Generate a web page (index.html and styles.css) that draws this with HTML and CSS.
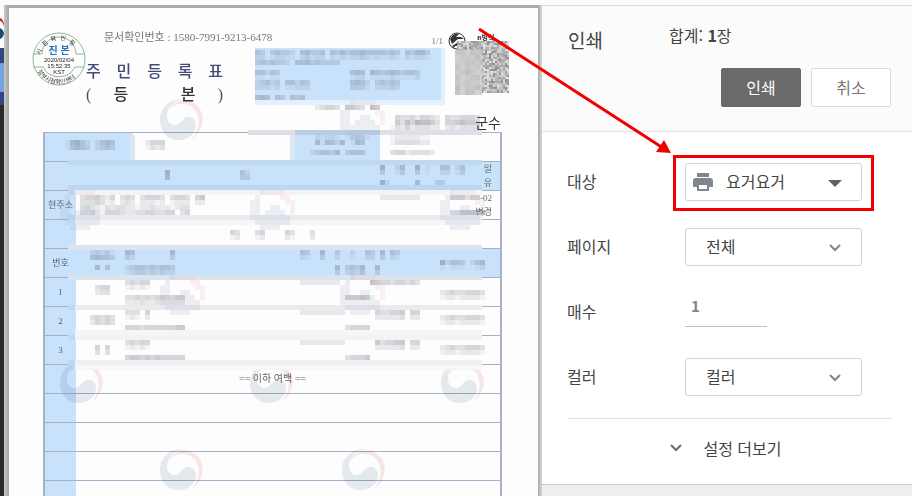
FILE: index.html
```html
<!DOCTYPE html>
<html lang="ko">
<head>
  <meta charset="UTF-8">
  <meta name="viewport" content="width=device-width, initial-scale=1.0">
  <title>인쇄</title>
  <link rel="stylesheet" href="styles.css">
</head>
<body>
  <div class="backdrop">
    <svg width="4" height="496" viewBox="0 0 4 496">
      <rect y="105" width="4" height="391" fill="#2b2827"/>
      <rect y="48" width="4" height="57" fill="#34447f"/>
      <rect y="63" width="4" height="29" rx="1" fill="#76a5dc"/>
      <path d="M0 18 Q3 19 4 24 L4 26 Q2 21 0 21Z" fill="#cf2438"/>
      <path d="M0 28 Q4 30 4 34 Q3 38 0 39Z" fill="#1e4a70"/>
    </svg>
  </div>

  <main class="preview">
    <div class="paper">
      <header class="doc-header">
        <svg class="stamp" width="54" height="54" viewBox="0 0 54 54">
          <defs>
            <path id="arc-top" d="M8 27 A19 19 0 0 1 46 27"/>
            <path id="arc-bottom" d="M2 27 A25 25 0 0 0 52 27"/>
          </defs>
          <g fill="none" stroke="#8fb893">
            <circle cx="27" cy="27" r="26"/>
            <path d="M1 22H10M44 22H53M10 22A17 17 0 0 1 44 22M1 35H11M43 35H53M11 35A18 18 0 0 0 43 35"/>
          </g>
          <text class="stamp-ring"><textPath href="#arc-top" startOffset="4">시  점  확  인  필</textPath></text>
          <text class="stamp-ring"><textPath href="#arc-bottom" startOffset="13">정부시점확인센터</textPath></text>
          <text class="stamp-title" x="27" y="22">진 본</text>
          <text class="stamp-date" x="27" y="30">2020/02/04</text>
          <text class="stamp-date" x="27" y="36">15:52:35</text>
          <text class="stamp-date" x="27" y="42">KST</text>
        </svg>

        <div class="doc-head">
          <p class="doc-number">문서확인번호 : 1580-7991-9213-6478</p>
          <h1 class="doc-title"><span>주</span><span>민</span><span>등</span><span>록</span><span>표</span></h1>
          <p class="doc-kind"><span>(</span><b>등</b><b>본</b><span>)</span></p>
        </div>

        <div class="doc-info">
          <p class="page-number">1/1</p>
          <div class="info-box"></div>
        </div>

        <svg class="doc-code" width="64" height="66" viewBox="446 30 64 66">
          <circle cx="457" cy="41" r="8" fill="none" stroke="#333" stroke-width="1"/>
          <path d="M450 39Q453 33 459 34L456 37L461 37L464 39L458 39L452 44ZM452 46L460 41L465 42L458 44L461 46L455 46L454 48Z" fill="#333"/>
          <text class="code-label" x="477" y="40">B방식</text>
          <g id="qr"></g>
        </svg>
      </header>

      <p class="issuer">군수</p>

      <table class="register">
        <colgroup>
          <col class="col-no"><col class="col-label"><col class="col-name"><col class="col-reason"><col>
        </colgroup>
        <tbody>
          <tr><td class="blue" colspan="2"></td><td></td><td class="blue"></td><td></td></tr>
          <tr class="blue"><td colspan="4"></td><td class="edge">일<br>유</td></tr>
          <tr><th>현주소</th><td colspan="3"></td><td class="edge">-02<br>변경</td></tr>
          <tr><th></th><td colspan="4"></td></tr>
          <tr class="blue"><th>번호</th><td colspan="4"></td></tr>
          <tr><th>1</th><td colspan="4"></td></tr>
          <tr><th>2</th><td colspan="4"></td></tr>
          <tr><th>3</th><td colspan="4"></td></tr>
          <tr><th></th><td class="end-mark" colspan="4">== 이하 여백 ==</td></tr>
          <tr><th></th><td colspan="4"></td></tr>
          <tr><th></th><td colspan="4"></td></tr>
          <tr><th></th><td colspan="4"></td></tr>
          <tr><th></th><td colspan="4"></td></tr>
        </tbody>
      </table>

      <svg class="watermarks" width="529" height="488" viewBox="9 8 529 488">
        <defs>
          <g id="mark">
            <path d="M24 1C10 0 0 9 0 22C0 34 8 42 18 42C28 42 36 36 36 27C36 21 31 18 27 19C22 20 20 27 15 27C10 27 7 23 7 18C7 9 14 2 24 1Z" fill="#e6ebf0"/>
            <path d="M8 13C12 3 24 0 32 4C46 11 47 30 31 42C42 30 41 14 30 8C22 4 13 6 8 13Z" fill="#fae7e9"/>
          </g>
        </defs>
        <use href="#mark" x="160" y="98"/>
        <use href="#mark" x="60" y="361"/>
        <use href="#mark" x="250" y="361"/>
        <use href="#mark" x="441" y="361"/>
        <use href="#mark" x="160" y="448"/>
        <use href="#mark" x="342" y="448"/>
      </svg>
      <svg class="mosaic" id="mosaic" width="529" height="488" viewBox="9 8 529 488"></svg>
    </div>
  </main>

  <form class="sidebar">
    <header class="sidebar-header">
      <div class="summary">
        <h2>인쇄</h2>
        <p>합계: <b>1</b>장</p>
      </div>
      <div class="actions">
        <button type="button" class="button primary">인쇄</button>
        <button type="button" class="button">취소</button>
      </div>
    </header>

    <div class="settings">
      <div class="row">
        <label for="target">대상</label>
        <div class="field printer">
          <svg class="printer-icon" width="20" height="18" viewBox="0 0 20 18">
            <path d="M4 0H16V4H4ZM3 5H17A3 3 0 0 1 20 8V14H16V10H4V14H0V8A3 3 0 0 1 3 5Z" fill="#80868b"/>
            <path d="M5 11H15V17H5Z" fill="#fff" stroke="#80868b" stroke-width="2"/>
          </svg>
          <select id="target"><option>요거요거</option></select>
          <svg class="arrow" width="14" height="8" viewBox="0 0 14 8"><path d="M0 1H14L7 8Z" fill="#5f6368"/></svg>
        </div>
      </div>
      <div class="row">
        <label for="pages">페이지</label>
        <div class="field">
          <select id="pages"><option>전체</option></select>
          <svg class="arrow" width="14" height="8" viewBox="0 0 14 8"><path d="M2 1L7 6L12 1" fill="none" stroke="#858585" stroke-width="2"/></svg>
        </div>
      </div>
      <div class="row">
        <label for="copies">매수</label>
        <input id="copies" type="text" value="1">
      </div>
      <div class="row">
        <label for="color">컬러</label>
        <div class="field">
          <select id="color"><option>컬러</option></select>
          <svg class="arrow" width="14" height="8" viewBox="0 0 14 8"><path d="M2 1L7 6L12 1" fill="none" stroke="#858585" stroke-width="2"/></svg>
        </div>
      </div>
      <button type="button" class="more">
        <svg width="14" height="8" viewBox="0 0 14 8"><path d="M2 1L7 6L12 1" fill="none" stroke="#6b6e73" stroke-width="2"/></svg>
        설정 더보기
      </button>
    </div>

    <svg class="pointer" width="200" height="140" viewBox="475 20 200 140">
      <path d="M479 29L663 148" stroke="#f20000" stroke-width="3"/>
      <path d="M671 153L656 152L664 140Z" fill="#f20000"/>
    </svg>
  </form>

  <script src="mosaic.js"></script>
</body>
</html>
```
FILE: styles.css
```css
* {
  box-sizing: border-box;
}

body {
  margin: 0;
  padding-top: 5px;
  min-height: 100vh;
  display: flex;
  overflow: hidden;
  background-color: #fcfcfc;
  font-family: "Noto Sans CJK KR", sans-serif;
  color: #444;
}

h1, h2, p {
  margin: 0;
  font-weight: normal;
}

.backdrop {
  width: 4px;
  margin-top: -5px;
  height: 100vh;
  overflow: hidden;
}

.backdrop svg {
  display: block;
}

/* preview */
.preview {
  flex: 1;
  height: calc(100vh - 5px);
  padding: 3px 4px 0 5px;
  overflow: hidden;
  background: linear-gradient(90deg, #c9c9c7, #a9a9a5 4px, #a9a9a5 calc(100% - 4px), #d8d8d6);
}

.paper {
  position: relative;
  height: 100%;
  overflow: hidden;
  background-color: #fdfdfd;
  font-family: "Liberation Serif", "Noto Sans CJK KR", serif;
}

.doc-header {
  display: flex;
  height: 106px;
  padding: 22px 0 0 23px;
}

.stamp {
  flex: none;
  margin-top: 2px;
}

.stamp text {
  font-family: "Noto Sans CJK KR", sans-serif;
}

.stamp .stamp-ring {
  font-size: 6px;
  white-space: pre;
  fill: #333;
}

.stamp .stamp-title {
  font-size: 10px;
  font-weight: bold;
  text-anchor: middle;
  fill: #2473b5;
}

.stamp .stamp-date {
  font-family: "Liberation Sans", sans-serif;
  font-size: 6px;
  text-anchor: middle;
  fill: #222;
}

.doc-head {
  flex: none;
  width: 137px;
}

.doc-number {
  padding-left: 18px;
  font-size: 11px;
  line-height: 15px;
  white-space: nowrap;
  color: #777;
}

.doc-title {
  display: flex;
  justify-content: space-between;
  margin-top: 15px;
  font-size: 16px;
  line-height: 23px;
  font-weight: 500;
  color: #424b78;
}

.doc-kind {
  display: flex;
  justify-content: space-between;
  font-size: 16px;
  line-height: 23px;
  color: #424b78;
}

.doc-kind b {
  font-weight: 500;
  color: #333;
}

.doc-kind b:first-of-type {
  margin-right: 30px;
}

.doc-info {
  flex: none;
  width: 190px;
  margin-left: 32px;
}

.page-number {
  height: 18px;
  padding: 5px 2px 0 0;
  text-align: right;
  font-size: 9px;
  line-height: 12px;
  color: #777;
}

.info-box {
  height: 57px;
  background-color: #c9e2fb;
  border: solid #e4f0fb;
  border-width: 0 4px 5px 0;
}

.doc-code {
  flex: none;
  margin-left: 1px;
}

.code-label {
  font-size: 7px;
  font-weight: bold;
  fill: #333;
}

.issuer {
  padding-right: 37px;
  text-align: right;
  font-size: 14px;
  line-height: 20px;
  height: 18px;
  color: #333;
}

.register {
  width: calc(100% - 70px);
  margin-left: 34px;
  table-layout: fixed;
  border-collapse: separate;
  border-spacing: 0;
  border: solid #a9b1c8;
  border-width: 0 2px;
  font-size: 10px;
  line-height: 14px;
}

.col-no {
  width: 31px;
}

.col-label {
  width: 57px;
}

.col-name {
  width: 162px;
}

.col-reason {
  width: 85px;
}

.register td,
.register th {
  height: 29px;
  padding: 0;
  border-top: 1px solid #a6afc8;
  font-weight: normal;
  color: #666;
}

.register th {
  background-color: #c9e2fb;
  font-size: 9px;
  white-space: nowrap;
  color: #4f5f74;
}

.register .blue {
  background-color: #c9e2fb;
}

.register .edge {
  padding-right: 8px;
  text-align: right;
  font-size: 9px;
}

.register .end-mark {
  padding-right: 31px;
  text-align: center;
}

.watermarks,
.mosaic {
  position: absolute;
  top: 0;
  left: 0;
}

.watermarks {
  mix-blend-mode: multiply;
}

/* settings */
.sidebar {
  position: relative;
  flex: 0 0 370px;
  height: calc(100vh - 5px);
  background-color: #eee;
  border-top: 1px solid #ddd;
}

.sidebar-header {
  height: 126px;
  padding: 16px 21px 0 26px;
  background-color: #fbfbfb;
  border-bottom: 1px solid #e4e4e4;
}

.summary {
  display: flex;
}

.summary h2 {
  width: 101px;
  padding-top: 4px;
  font-size: 19px;
  line-height: 28px;
}

.summary p {
  font-size: 16px;
  line-height: 26px;
}

.summary b {
  font-weight: bold;
}

.actions {
  display: flex;
  justify-content: flex-end;
  gap: 10px;
  margin-top: 14px;
}

.button {
  width: 80px;
  height: 39px;
  padding: 0 0 2px;
  font-family: inherit;
  font-size: 16px;
  color: #777;
  background-color: #fff;
  border: 1px solid #dcdcdc;
  border-radius: 2px;
}

.button.primary {
  color: #fff;
  background-color: #6b6a68;
  border-color: #6b6a68;
}

.settings {
  padding: 17px 20px 0 25px;
  height: 353px;
  background-color: #fff;
  border-bottom: 1px solid #c8c8c8;
}

.row {
  display: flex;
  align-items: center;
  height: 65px;
}

.row label {
  width: 118px;
  padding-bottom: 2px;
  font-size: 16px;
  line-height: 24px;
}

.field {
  position: relative;
  width: 177px;
}

.field select {
  display: block;
  appearance: none;
  width: 100%;
  height: 38px;
  padding: 0 40px 2px 20px;
  font-family: inherit;
  font-size: 16px;
  color: #444;
  background-color: #fff;
  border: 1px solid #d4d4d4;
  border-radius: 3px;
}

.field .arrow {
  position: absolute;
  right: 20px;
  top: 16px;
}

.printer select {
  padding-left: 40px;
}

.printer-icon {
  position: absolute;
  left: 8px;
  top: 10px;
}

/* red frame around the printer list */
.printer::after {
  content: '';
  position: absolute;
  inset: -8px -12px -10px;
  border: 3px solid #f20000;
  pointer-events: none;
}

#copies {
  width: 82px;
  height: 38px;
  padding: 0 6px 4px;
  margin-bottom: 8px;
  font-family: inherit;
  font-size: 15px;
  font-weight: bold;
  color: #858585;
  background: none;
  border: none;
  border-bottom: 1px solid #c0c0c0;
}

.more {
  display: flex;
  align-items: center;
  justify-content: center;
  gap: 20px;
  width: 100%;
  height: 58px;
  margin-top: 9px;
  padding: 0 8px 0 0;
  font-family: inherit;
  font-size: 16px;
  color: #444;
  background: none;
  border: none;
  border-top: 1px solid #e0e0e0;
}

.pointer {
  position: absolute;
  left: -67px;
  top: 14px;
  pointer-events: none;
}
```
FILE: mosaic.js
```js
const NS = 'http://www.w3.org/2000/svg';
const CELL = 5;
const mosaic = document.getElementById('mosaic');
const qr = document.getElementById('qr');

function rect(parent, x, y, w, h, fill, opacity) {
  const el = document.createElementNS(NS, 'rect');
  el.setAttribute('x', x);
  el.setAttribute('y', y);
  el.setAttribute('width', w);
  el.setAttribute('height', h);
  el.setAttribute('fill', fill);
  if (opacity !== undefined) el.setAttribute('opacity', opacity);
  parent.appendChild(el);
}

// code square, 2px dots
let seed = 7;
for (let y = 41; y < 93; y += 2) {
  for (let x = 457; x < 509; x += 2) {
    seed = (seed * 1103515245 + 12345) % 2147483648;
    const shade = 140 + Math.floor(seed / 65536) % 90;
    rect(qr, x, y, 2, 2, `rgb(${shade},${shade},${shade})`);
  }
}
for (let y = 50; y < 95; y += CELL) {
  for (let x = 455; x < 482; x += CELL) {
    seed = (seed * 1103515245 + 12345) % 2147483648;
    const shade = 192 + Math.floor(seed / 65536) % 20;
    rect(qr, x, y, Math.min(CELL, 482 - x), CELL, `rgb(${shade},${shade},${shade})`);
  }
}

// smeared table lines: x, y, width, colour
const bands = [
  [248, 130, 234, '#dfe0e7'], [295, 130, 85, '#b9cce3'],
  [130, 135, 5, '#dce6ef'], [290, 135, 5, '#dce6ef'],
  [68, 160, 414, '#c0d9ef'], [68, 185, 414, '#bcd7ef'],
  [75, 190, 407, '#f3f4f6'], [75, 215, 407, '#e9ebef'], [75, 220, 407, '#f6f6f8'],
  [68, 245, 414, '#dae5ef'], [68, 275, 414, '#dae4ee'],
  [75, 305, 407, '#ebebee'], [75, 330, 407, '#f6f6f8'], [75, 335, 407, '#f3f3f5'],
  [75, 360, 407, '#f0f0f3'], [75, 365, 407, '#f6f6f8'],
  [68, 190, 7, '#c1dcf7'], [68, 215, 7, '#bdd8f2'], [68, 305, 7, '#bdd8f2'],
  [68, 335, 7, '#bdd8f2'], [68, 360, 7, '#bdd8f2']
];
bands.forEach(([x, y, w, fill]) => {
  const h = x === 130 || x === 290 ? 25 : CELL;
  rect(mosaic, x, y, w, h, fill);
});

// coarse watermarks: b = blue grey, r = pink
const mark = [
  '..brrrr..', '.b....rr.', 'bb.....rr', 'bb..bb..r', 'bb.bbbb.r', 'bbbbbbbb.', '.bbbbbbb.', '..bbbb...'
];
[[340, 100], [60, 190], [250, 190], [440, 190], [160, 275], [340, 275]].forEach(([mx, my]) => {
  mark.forEach((line, j) => {
    [...line].forEach((c, i) => {
      if (c === '.') return;
      rect(mosaic, mx + i * CELL, my + j * CELL, CELL, CELL, c === 'b' ? '#a9b6cc' : '#f0b8bf', 0.2);
    });
  });
});

// blurred words: x, y, darkness of each cell
const words = [
  [255, 50, '43034332045334043534454444343043553'],
  [255, 55, '22012211023122021212232121121021221'],
  [255, 60, '34343320445343333'],
  [255, 70, '44243'], [255, 75, '11011'], [255, 80, '23423044243'], [255, 85, '22212011222'],
  [255, 95, '4540430434'],
  [350, 70, '45405434543443'], [350, 75, '12201111211112'], [350, 80, '4542034343'], [350, 85, '3331022232'],
  [315, 105, '2344304543054'],
  [390, 115, '043342443204334443'], [390, 120, '053647665304456554'], [390, 125, '132423332202323333'],
  [65, 140, '1564202454'], [65, 145, '1454302343'], [145, 140, '2444'], [145, 145, '1323'],
  [315, 135, '2122101232'], [315, 140, '5154250154'], [310, 150, '23443503444'],
  [390, 135, '12222211'], [390, 140, '13333322'], [390, 150, '344233332'],
  [165, 170, '6'], [165, 175, '5'], [240, 170, '42'], [240, 175, '33'],
  [380, 165, '60025006010044024'], [380, 170, '30013003010022013'],
  [380, 180, '6200000500033'],
  [80, 195, '3434324034303444303443045'], [80, 200, '3333212023202221201222022'],
  [80, 205, '2332032332212232221233'], [80, 210, '3343044432233443344034'],
  [380, 195, '22222222000000555344'], [450, 210, '4355566'],
  [230, 230, '43000340000430003'], [230, 235, '12000120000210002'],
  [90, 250, '23231'], [90, 255, '45443'], [95, 265, '504'],
  [125, 250, '5400000005'], [125, 255, '3200000003'], [125, 265, '2344343443'], [125, 270, '1233232322'],
  [300, 250, '43005003002004305043'], [300, 255, '21003002001002203021'],
  [335, 265, '503435005'], [335, 270, '302324003'], [440, 260, '6244302454'], [440, 265, '1011100121'],
  [95, 285, '344'], [95, 290, '233'], [125, 280, '34344'], [125, 285, '12121'],
  [125, 295, '334343443444'], [125, 300, '222322322222'],
  [300, 280, '22222222000000'], [370, 280, '5444344343'], [345, 295, '45454'],
  [440, 290, '234334443'], [440, 295, '122122221'],
  [90, 315, '34343'], [90, 320, '24343'], [125, 310, '33304'], [125, 315, '12102'],
  [125, 325, '444344444455'], [300, 310, '222222222'], [375, 310, '433445044'], [375, 315, '222223022'],
  [345, 325, '34444'], [440, 315, '234334443'], [440, 320, '122122221'],
  [95, 345, '404'], [95, 350, '303'], [125, 340, '34344'], [125, 345, '12121'],
  [125, 355, '455454544444'], [300, 340, '222222222'], [375, 340, '534455044'], [375, 345, '222223022'],
  [345, 355, '34445'], [440, 345, '234334443'], [440, 350, '122122221']
];
words.forEach(([x, y, cells]) => {
  [...cells].forEach((c, i) => {
    const left = x + i * CELL;
    if (c === '0' || left >= 485) return;
    rect(mosaic, left, y, CELL, CELL, '#454c5a', Number(c) * 0.055);
  });
});
```
